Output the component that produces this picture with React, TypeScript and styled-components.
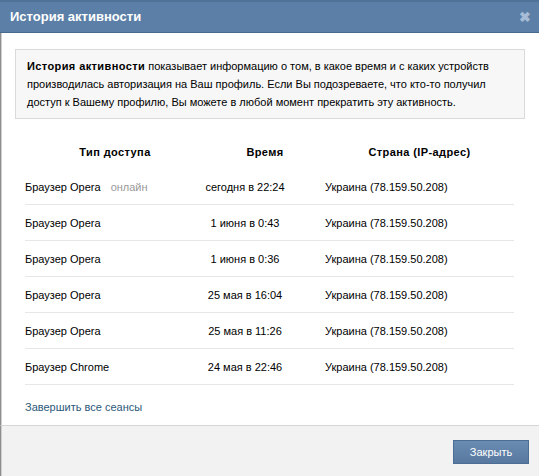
import React from "react";
import styled, { createGlobalStyle } from "styled-components";

const Global = createGlobalStyle`
  html, body { margin: 0; padding: 0; background: #fff; }
  body { font-family: "Liberation Sans", Arial, sans-serif; font-size: 11px; color: #000; }
  * { box-sizing: border-box; }
`;

const Dialog = styled.div`
  width: 539px;
  height: 476px;
  display: flex;
  flex-direction: column;
  overflow: hidden;
`;

const TitleBar = styled.div`
  height: 33px;
  flex: none;
  background: #5b7fa6;
  border-top: 2px solid #4f7299;
  border-bottom: 1px solid #48698f;
  display: flex;
  align-items: center;
  justify-content: space-between;
  padding: 0 10px 0 10px;
`;

const Title = styled.div`
  color: #fff;
  font-weight: bold;
  font-size: 13px;
  margin-top: -1px;
`;

const CloseX = styled.div`
  color: #a6bcd6;
  font-weight: bold;
  font-size: 14px;
  line-height: 1;
  margin-right: -2px;
`;

const Body = styled.div`
  flex: 1;
  background: #fff;
  border-left: 1px solid #8e8e8e;
  box-shadow: inset 1px 0 0 #cfcfcf;
  padding: 16px 14px 0 14px;
  display: flex;
  flex-direction: column;
`;

const InfoBox = styled.div`
  background: #f7f7f7;
  border: 1px solid #dadada;
  padding: 7px 12px 7px 11px;
  line-height: 18px;
  color: #000;
`;

const Strong = styled.b`
  font-weight: bold;
  letter-spacing: 0.4px;
`;

const Table = styled.div`
  margin: 15px 11px 0 10px;
  display: flex;
  flex-direction: column;
`;

const HeadRow = styled.div`
  height: 35px;
  display: grid;
  grid-template-columns: 180px 120px 1fr;
  align-items: center;
  font-weight: bold;
  letter-spacing: 0.4px;
`;

const HeadCell = styled.div`
  text-align: center;
`;

const Row = styled.div`
  height: 36px;
  display: grid;
  grid-template-columns: 140px 160px 1fr;
  align-items: center;
  border-bottom: 1px solid #e6e6e6;
  white-space: nowrap;
`;

const Cell = styled.div<{ $center?: boolean }>`
  display: flex;
  justify-content: ${(p) => (p.$center ? "center" : "flex-start")};
  white-space: nowrap;
`;

const Online = styled.span`
  color: #999;
  margin-left: 10px;
`;

const LinkRow = styled.div`
  padding: 15px 10px 11px 10px;
`;

const Link = styled.a`
  color: #2b587a;
  text-decoration: none;
  line-height: 14px;
`;

const Footer = styled.div`
  height: 51px;
  flex: none;
  background: #f2f2f2;
  border-top: 1px solid #d6d6d6;
  border-left: 1px solid #8e8e8e;
  box-shadow: inset 1px 0 0 #cfcfcf;
  display: flex;
  align-items: center;
  justify-content: flex-end;
  padding: 0 10px 0 0;
`;

const Button = styled.button`
  width: 76px;
  height: 24px;
  margin-top: 1px;
  border: 1px solid #4c6e94;
  background: linear-gradient(#6a8cb1, #5878a0);
  color: #fff;
  font-family: "Liberation Sans", Arial, sans-serif;
  font-size: 11px;
  padding: 0;
  cursor: pointer;
`;

const rows = [
  { t: "сегодня в 22:24", online: true, b: "Браузер Opera" },
  { t: "1 июня в 0:43", b: "Браузер Opera" },
  { t: "1 июня в 0:36", b: "Браузер Opera" },
  { t: "25 мая в 16:04", b: "Браузер Opera" },
  { t: "25 мая в 11:26", b: "Браузер Opera" },
  { t: "24 мая в 22:46", b: "Браузер Chrome" },
];

export default function App() {
  return (
    <>
      <Global />
      <Dialog>
        <TitleBar>
          <Title>История активности</Title>
          <CloseX>✖</CloseX>
        </TitleBar>
        <Body>
          <InfoBox>
            <Strong>История активности</Strong> показывает информацию о том, в какое время и с каких устройств
            производилась авторизация на Ваш профиль. Если Вы подозреваете, что кто-то получил
            доступ к Вашему профилю, Вы можете в любой момент прекратить эту активность.
          </InfoBox>
          <Table>
            <HeadRow>
              <HeadCell>Тип доступа</HeadCell>
              <HeadCell>Время</HeadCell>
              <HeadCell>Страна (IP-адрес)</HeadCell>
            </HeadRow>
            {rows.map((r, i) => (
              <Row key={i}>
                <Cell>
                  {r.b}
                  {r.online && <Online>онлайн</Online>}
                </Cell>
                <Cell $center>{r.t}</Cell>
                <Cell>Украина (78.159.50.208)</Cell>
              </Row>
            ))}
          </Table>
          <LinkRow>
            <Link href="#">Завершить все сеансы</Link>
          </LinkRow>
        </Body>
        <Footer>
          <Button>Закрыть</Button>
        </Footer>
      </Dialog>
    </>
  );
}
